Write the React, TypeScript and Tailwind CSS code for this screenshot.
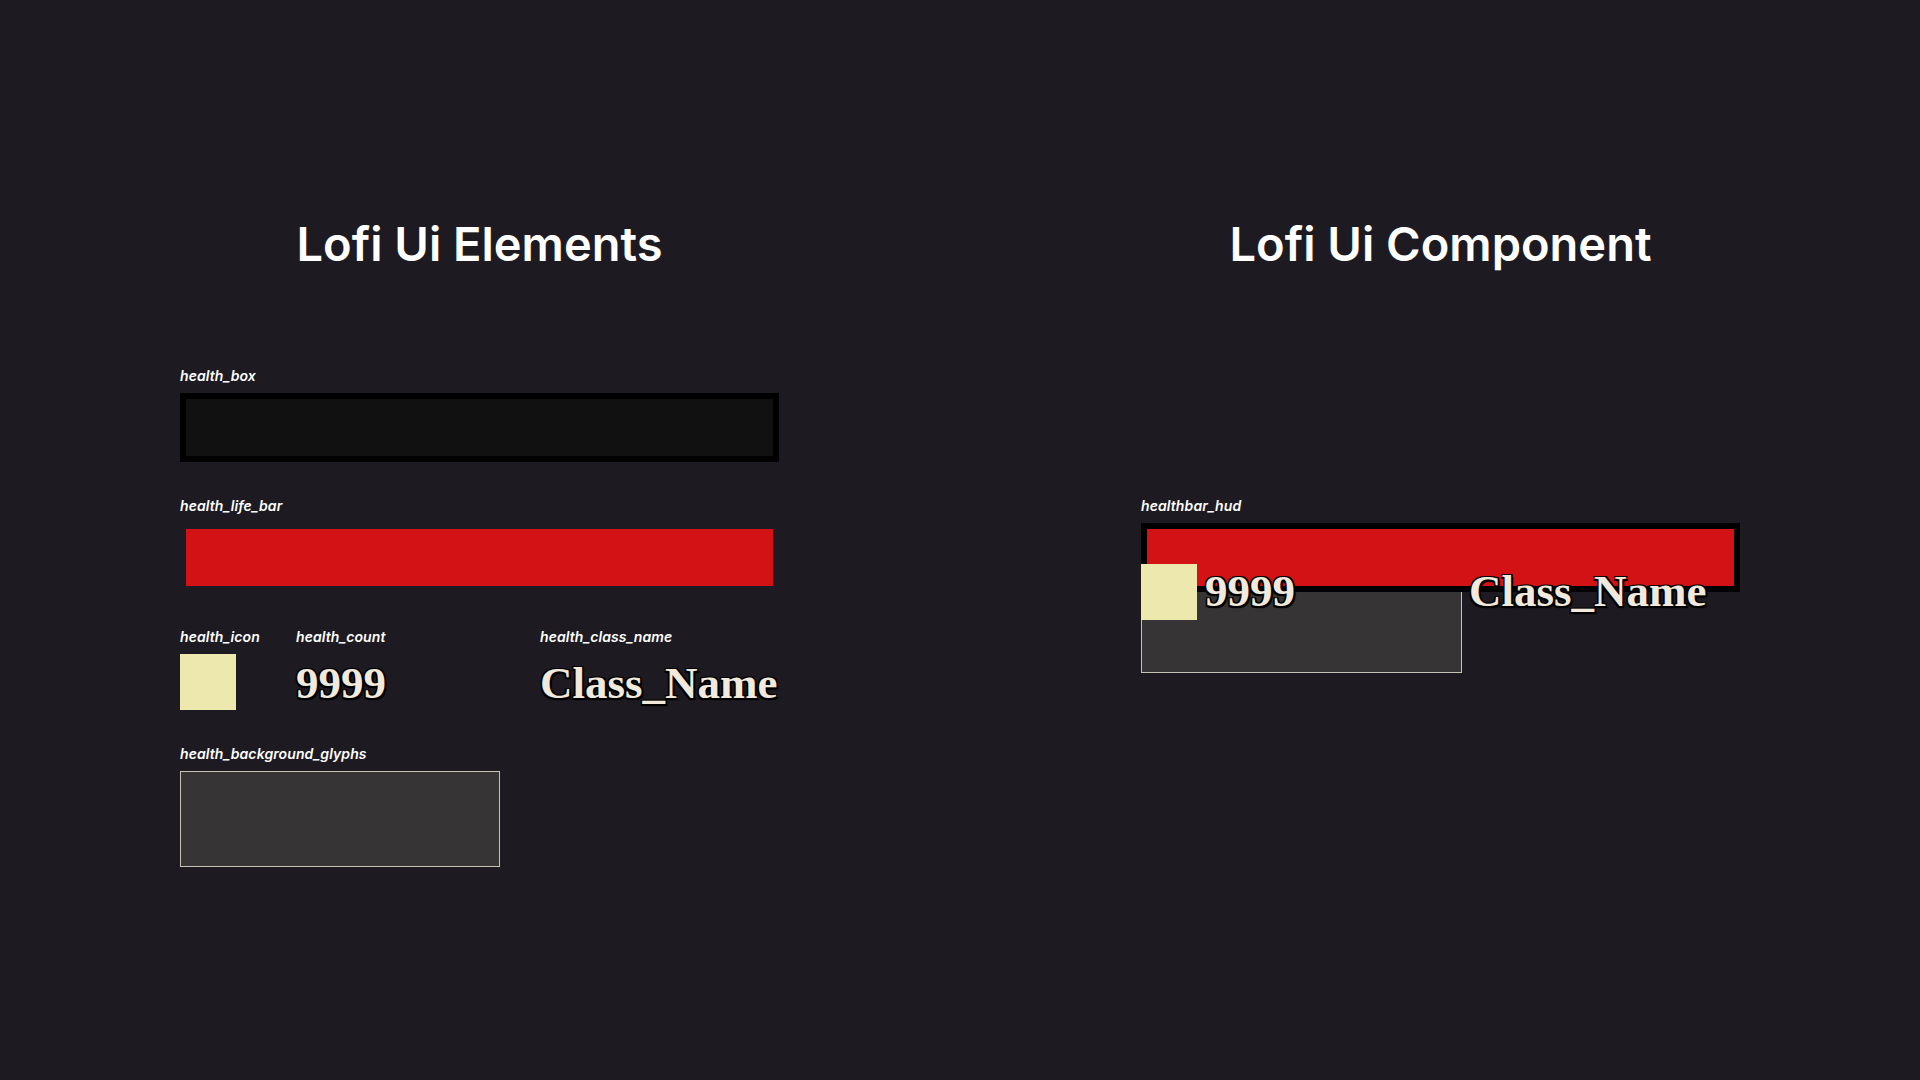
const LABEL = "block text-[14px] leading-[20px] font-semibold italic text-white font-['Inter',sans-serif] tracking-[0.1px] whitespace-nowrap";
const NUMBERS =
  "font-['Liberation_Serif',serif] font-bold text-[#f0e9dc] text-[45px] leading-[56px] whitespace-nowrap [text-shadow:-1.5px_-1.5px_0_#000,1.5px_-1.5px_0_#000,-1.5px_1.5px_0_#000,1.5px_1.5px_0_#000,0_2px_1px_#000,2px_2px_1px_#000]";
const HEADING = "text-center text-[47px] leading-[58px] font-semibold text-white font-['Inter',sans-serif]";

function Label({ children }: { children: React.ReactNode }) {
  return <span className={LABEL}>{children}</span>;
}

function Elements() {
  return (
    <div className="w-[599px]">
      <h1 className={HEADING}>Lofi Ui Elements</h1>
      <div className="mt-[93px]">
        <Label>health_box</Label>
        <div className="mt-[7px] h-[69px] border-[6px] border-black bg-[#111111]" />
      </div>
      <div className="mt-[34px]">
        <Label>health_life_bar</Label>
        <div className="mt-[13px] px-[6px]">
          <div className="h-[57px] bg-[#d21214]" />
        </div>
      </div>
      <div className="mt-[41px] grid grid-cols-[116px_244px_1fr]">
        <div>
          <Label>health_icon</Label>
          <div className="mt-[7px] h-[56px] w-[56px] bg-[#ece8ae]" />
        </div>
        <div>
          <Label>health_count</Label>
          <div className={`mt-[8px] ${NUMBERS}`}>9999</div>
        </div>
        <div>
          <Label>health_class_name</Label>
          <div className={`mt-[8px] ${NUMBERS}`}>Class_Name</div>
        </div>
      </div>
      <div className="mt-[33px]">
        <Label>health_background_glyphs</Label>
        <div className="mt-[7px] h-[96px] w-[320px] border border-[#c5c4b4] bg-[#363434]" />
      </div>
    </div>
  );
}

function Hud() {
  return (
    <div className="w-[599px]">
      <h1 className={HEADING}>Lofi Ui Component</h1>
      <div className="mt-[223px]">
        <Label>healthbar_hud</Label>
        <div className="relative mt-[7px] h-[150px]">
          <div className="absolute left-0 top-[54px] h-[96px] w-[321px] border border-[#c5c4b4] bg-[#363434]" />
          <div className="absolute inset-x-0 top-0 h-[69px] border-[6px] border-black bg-[#d21214]" />
          <div className="absolute left-0 top-[41px] h-[56px] w-[56px] bg-[#ece8ae]" />
          <div className={`absolute left-[64px] top-[40px] ${NUMBERS}`}>9999</div>
          <div className={`absolute left-[328px] top-[40px] ${NUMBERS}`}>Class_Name</div>
        </div>
      </div>
    </div>
  );
}

export default function App() {
  return (
    <div className="flex h-[1080px] w-[1920px] justify-between overflow-hidden bg-[#1d1b21] px-[180px] pt-[215px]">
      <Elements />
      <Hud />
    </div>
  );
}
